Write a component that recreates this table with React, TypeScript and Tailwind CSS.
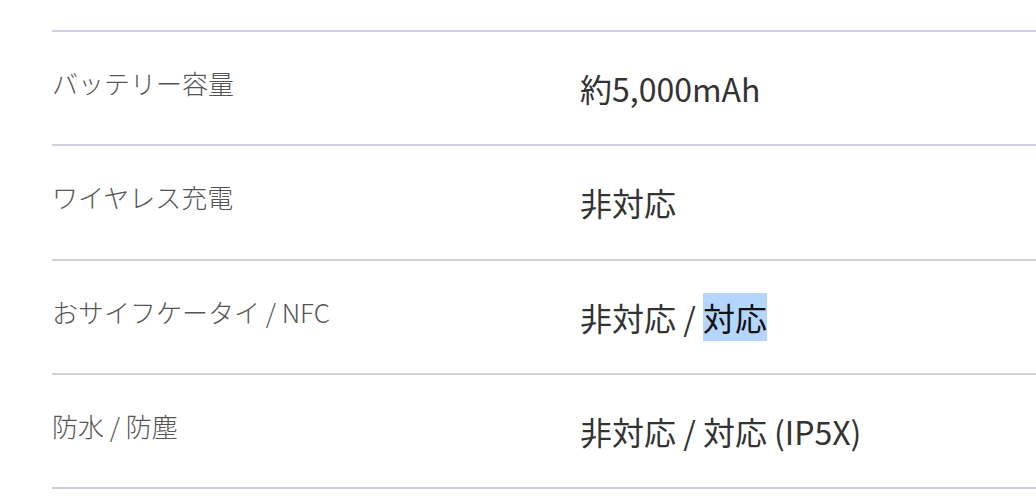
import React from "react";

const rows: { label: string; value: React.ReactNode }[] = [
  { label: "バッテリー容量", value: "約5,000mAh" },
  { label: "ワイヤレス充電", value: "非対応" },
  {
    label: "おサイフケータイ / NFC",
    value: (
      <>
        非対応 / <span className="inline-block bg-[#b4d5fe] leading-[48px] text-[#111]">対応</span>
      </>
    ),
  },
  { label: "防水 / 防塵", value: "非対応 / 対応 (IP5X)" },
];

export default function App() {
  return (
    <div
      className="w-[1036px] h-[504px] overflow-hidden bg-white pl-[52px] pt-[30px]"
      style={{ fontFamily: '"Noto Sans CJK JP", "Noto Sans", sans-serif' }}
    >
      {rows.map((r, i) => (
        <div key={i} className="flex h-[114.25px] border-t-2 border-[#cfcde0]">
          <div className="w-[528px] shrink-0 pt-[31px] text-[26px] font-light leading-[39px] text-[#555555]">
            {r.label}
          </div>
          <div className="pt-[32px] text-[32px] leading-[48px] text-[#333333]">{r.value}</div>
        </div>
      ))}
      <div className="border-t-2 border-[#cfcde0]" />
    </div>
  );
}
